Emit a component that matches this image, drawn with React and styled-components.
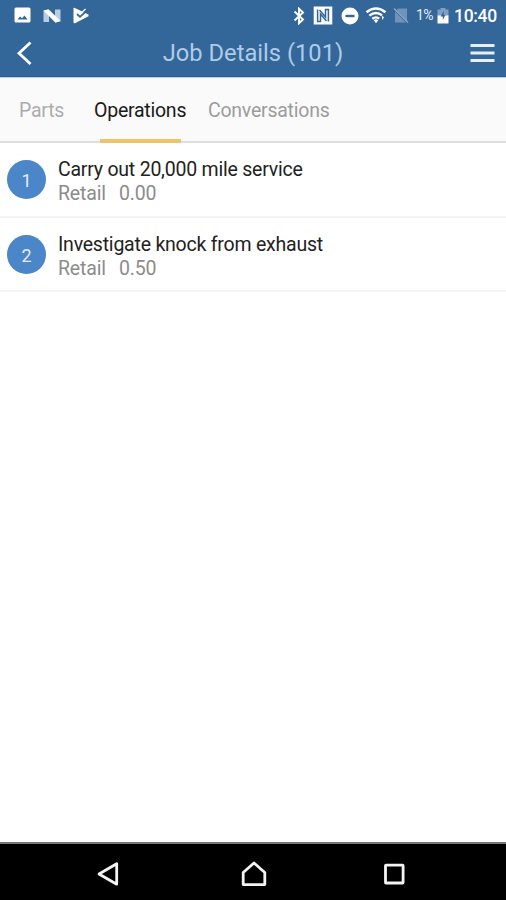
import React from 'react';
import styled, { createGlobalStyle } from 'styled-components';

const GlobalStyle = createGlobalStyle`
  * { box-sizing: border-box; }
  html, body { margin: 0; background: #fff; }
  body { font-family: Roboto, "Noto Sans", sans-serif; }
  svg { display: block; flex: none; }
`;

const Screen = styled.div`
  width: 506px;
  height: 900px;
  display: flex;
  flex-direction: column;
  overflow: hidden;
  background: #fff;
`;

const StatusBar = styled.div`
  height: 31px;
  flex: none;
  display: flex;
  align-items: center;
  justify-content: space-between;
  padding: 0 9px 0 14px;
  background: #336699;
  color: #fff;
`;

const StatusGroup = styled.div`
  display: flex;
  align-items: center;
  gap: ${(p) => p.$gap}px;
`;

const Percent = styled.span`
  width: 18px;
  margin-left: 4px;
  font-size: 14px;
  line-height: 31px;
  font-weight: 400;
  letter-spacing: -0.6px;
  color: #e6eef6;
  white-space: nowrap;
`;

const Clock = styled.span`
  width: 43px;
  margin-left: 5px;
  font-size: 17.5px;
  line-height: 32px;
  font-weight: 500;
  letter-spacing: -0.3px;
  white-space: nowrap;
`;

const Spacer = styled.span`
  width: ${(p) => p.$w}px;
`;

const AppBar = styled.header`
  height: 46px;
  flex: none;
  display: grid;
  grid-template-columns: 60px 1fr 60px;
  align-items: center;
  padding-bottom: 1px;
  background: #336699;
  border-bottom: 1px solid #2b5f93;
`;

const IconButton = styled.button`
  display: flex;
  justify-content: ${(p) => (p.$end ? 'flex-end' : 'flex-start')};
  padding: ${(p) => (p.$end ? '0 11px 0 0' : '0 0 0 16px')};
  border: 0;
  background: none;
`;

const Title = styled.h1`
  margin: 0;
  text-align: center;
  font-size: 23.7px;
  line-height: 44px;
  font-weight: 400;
  color: #aecbe8;
  white-space: nowrap;
`;

const Tabs = styled.nav`
  height: 66px;
  flex: none;
  display: flex;
  padding-left: 19px;
  background: #fafafa;
  border-top: 1px solid #c3cede;
  border-bottom: 2px solid #dedede;
`;

const Tab = styled.button`
  position: relative;
  width: ${(p) => p.$w}px;
  height: 65px;
  padding: 0;
  border: 0;
  background: none;
  text-align: left;
  font-family: inherit;
  font-size: 19.5px;
  letter-spacing: -0.24px;
  line-height: 65px;
  color: ${(p) => (p.$active ? '#1a1a1a' : p.$faint ? '#acacac' : '#9c9c9c')};
  white-space: nowrap;

  &::after {
    content: '';
    display: ${(p) => (p.$active ? 'block' : 'none')};
    position: absolute;
    left: 6px;
    bottom: 0;
    width: 81px;
    height: 4px;
    background: #eec466;
  }
`;

const List = styled.ul`
  flex: 1;
  margin: 0;
  padding: 0;
  list-style: none;
`;

const Row = styled.li`
  height: ${(p) => p.$h}px;
  display: flex;
  align-items: flex-start;
  padding: 15px 0 0 7px;
  border-bottom: 2px solid #f4f4f4;
`;

const Badge = styled.span`
  width: 39px;
  height: 39px;
  margin: 1.5px 12px 0 0;
  border-radius: 50%;
  background: #4a86c8;
  color: #e4eefa;
  font-size: 18px;
  line-height: 41px;
  text-align: center;
`;

const RowText = styled.div`
  display: flex;
  flex-direction: column;
`;

const Name = styled.span`
  font-size: 19.5px;
  letter-spacing: -0.22px;
  line-height: 24px;
  color: #222;
  white-space: nowrap;
`;

const Meta = styled.span`
  display: flex;
  font-size: 19.5px;
  letter-spacing: -0.15px;
  line-height: 24px;
  color: #8c8c8c;
`;

const Kind = styled.span`
  width: 61px;
`;

const NavBar = styled.footer`
  height: 58px;
  flex: none;
  display: flex;
  align-items: center;
  padding: 3px 0 0 96px;
  background: #000;
  border-top: 2px solid #777;
`;

const NavButton = styled.button`
  width: ${(p) => p.$w}px;
  padding: 0;
  border: 0;
  background: none;
`;

const ImageIcon = () => (
  <svg width="17" height="17" viewBox="0 0 17 17">
    <path fill="#fff" fillRule="evenodd" d="M2 .5h13a1.5 1.5 0 0 1 1.5 1.5v12a1.5 1.5 0 0 1-1.5 1.5H2A1.5 1.5 0 0 1 .5 14V2A1.5 1.5 0 0 1 2 .5zM3.500 12.500h10L10.500 8.500 8 11.200 6 9.400z" />
  </svg>
);

const NougatIcon = () => (
  <svg width="18" height="14" viewBox="0 0 18 14">
    <path fill="#b9cde2" d="M.5 1.500h5.500v11.500H.5zM12 .5h5.500v12H12z" />
    <path fill="#fff" d="M.5 1.500 5.500.3 17.500 12l-5 1.700z" />
  </svg>
);

const PlayCheckIcon = () => (
  <svg width="16" height="17" viewBox="0 0 16 17">
    <path fill="#fff" d="M.5 1.500Q.5.3 1.800.9L15.500 7.500v1.800L2 16.300q-1.500.3-1.500-1z" />
    <path fill="none" stroke="#336699" strokeWidth="1.800" d="m4 7 3 2.800L14 3.500" />
    <path fill="none" stroke="#fff" strokeWidth="1.300" d="m7 7 5.500-5" />
  </svg>
);

const BluetoothIcon = () => (
  <svg width="12" height="18" viewBox="0 0 12 18">
    <path fill="none" stroke="#fff" strokeWidth="1.900" d="m1.500 4.500 8.500 8-4 3.800V1.700l4 3.800-8.500 8" />
  </svg>
);

const NfcIcon = () => (
  <svg width="20" height="19" viewBox="0 0 20 19">
    <path fill="#fff" d="M.7.500H19.300V18.500H.7z" />
    <path fill="none" stroke="#336699" strokeWidth="1.500" d="M4.600 3.500V15.500H7.500V8L13.500 15M15.400 15.500V3.500H12.500V11L6.500 4" />
  </svg>
);

const DoNotDisturbIcon = () => (
  <svg width="18" height="18" viewBox="0 0 18 18">
    <circle cx="9" cy="9" r="8.500" fill="#fff" />
    <path stroke="#336699" strokeWidth="2.400" d="M4.500 9h9" />
  </svg>
);

const WifiIcon = () => (
  <svg width="22" height="17" viewBox="0 0 22 17">
    <path fill="none" stroke="#fff" strokeWidth="2.400" d="M1.500 5.200Q11-2 20.500 5.200M4.300 8.600Q11 3.600 17 8.300M7.300 11.800Q11 9 14.200 11.700" />
    <path fill="#fff" d="m8.700 13.200 2.300 3 2.300-3q-2.300-1.700-4.600 0zM17 8.500l2 2-2 2.500z" />
  </svg>
);

const NoSimIcon = () => (
  <svg width="16" height="17" viewBox="0 0 16 17">
    <path fill="#6f93b9" d="M5 1.500h9v12.300L3.500 3zM2 4.500l11 11H2z" />
    <path stroke="#8aa9c8" strokeWidth="1.400" d="m1 1.500 14 14" />
  </svg>
);

const BatteryIcon = () => (
  <svg width="12" height="18" viewBox="0 0 12 18">
    <path fill="#7f9fc1" d="M3.500 1h5v1.500H11.500V9H.5V2.500h3z" />
    <path fill="#fff" d="M.5 8.500h11v8H.5z" />
    <path fill="#336699" d="M6.800 4 3.500 9.500h2.300V13L8.500 8H6.800z" />
  </svg>
);

const BackIcon = () => (
  <svg width="18" height="24" viewBox="0 0 18 24">
    <path fill="none" stroke="#fff" strokeWidth="2.800" d="M14.500 1.500 3 12.300 14.500 23" />
  </svg>
);

const MenuIcon = () => (
  <svg width="25" height="20" viewBox="0 0 25 20">
    <path stroke="#e5eff9" strokeWidth="2.800" d="M.5 2.500h24M.5 10h24M.5 17.500h24" />
  </svg>
);

const NavBackIcon = () => (
  <svg width="24" height="26" viewBox="0 0 24 26">
    <path fill="none" stroke="#f4f4f4" strokeWidth="2.800" strokeLinejoin="round" d="M20.700 2.800v20.400L3 13z" />
  </svg>
);

const NavHomeIcon = () => (
  <svg width="26" height="26" viewBox="0 0 26 26">
    <path fill="none" stroke="#f4f4f4" strokeWidth="2.800" strokeLinejoin="round" d="M2.200 11.500 13 2l10.800 9.500v12.100H2.200z" />
  </svg>
);

const NavRecentIcon = () => (
  <svg width="22" height="22" viewBox="0 0 22 22">
    <rect x="2.500" y="2.200" width="17.600" height="17.800" rx=".5" fill="none" stroke="#f4f4f4" strokeWidth="2.800" />
  </svg>
);

const operations = [
  { id: 1, name: 'Carry out 20,000 mile service', hours: '0.00', height: 75 },
  { id: 2, name: 'Investigate knock from exhaust', hours: '0.50', height: 74 },
];

export default function App() {
  return (
    <Screen>
      <GlobalStyle />
      <StatusBar>
        <StatusGroup $gap={12}>
          <ImageIcon />
          <NougatIcon />
          <PlayCheckIcon />
        </StatusGroup>
        <StatusGroup $gap={0}>
          <BluetoothIcon />
          <Spacer $w={8} />
          <NfcIcon />
          <Spacer $w={8} />
          <DoNotDisturbIcon />
          <Spacer $w={6} />
          <WifiIcon />
          <Spacer $w={6} />
          <NoSimIcon />
          <Spacer $w={3} />
          <Percent>1%</Percent>
          <Spacer $w={3} />
          <BatteryIcon />
          <Clock>10:40</Clock>
        </StatusGroup>
      </StatusBar>
      <AppBar>
        <IconButton aria-label="Back"><BackIcon /></IconButton>
        <Title>Job Details (101)</Title>
        <IconButton $end aria-label="Menu"><MenuIcon /></IconButton>
      </AppBar>
      <Tabs>
        <Tab $w={75} $faint>Parts</Tab>
        <Tab $w={114} $active>Operations</Tab>
        <Tab $w={125}>Conversations</Tab>
      </Tabs>
      <List>
        {operations.map((op) => (
          <Row key={op.id} $h={op.height}>
            <Badge>{op.id}</Badge>
            <RowText>
              <Name>{op.name}</Name>
              <Meta><Kind>Retail</Kind>{op.hours}</Meta>
            </RowText>
          </Row>
        ))}
      </List>
      <NavBar>
        <NavButton $w={145} aria-label="Back"><NavBackIcon /></NavButton>
        <NavButton $w={142} aria-label="Home"><NavHomeIcon /></NavButton>
        <NavButton $w={22} aria-label="Recent apps"><NavRecentIcon /></NavButton>
      </NavBar>
    </Screen>
  );
}
